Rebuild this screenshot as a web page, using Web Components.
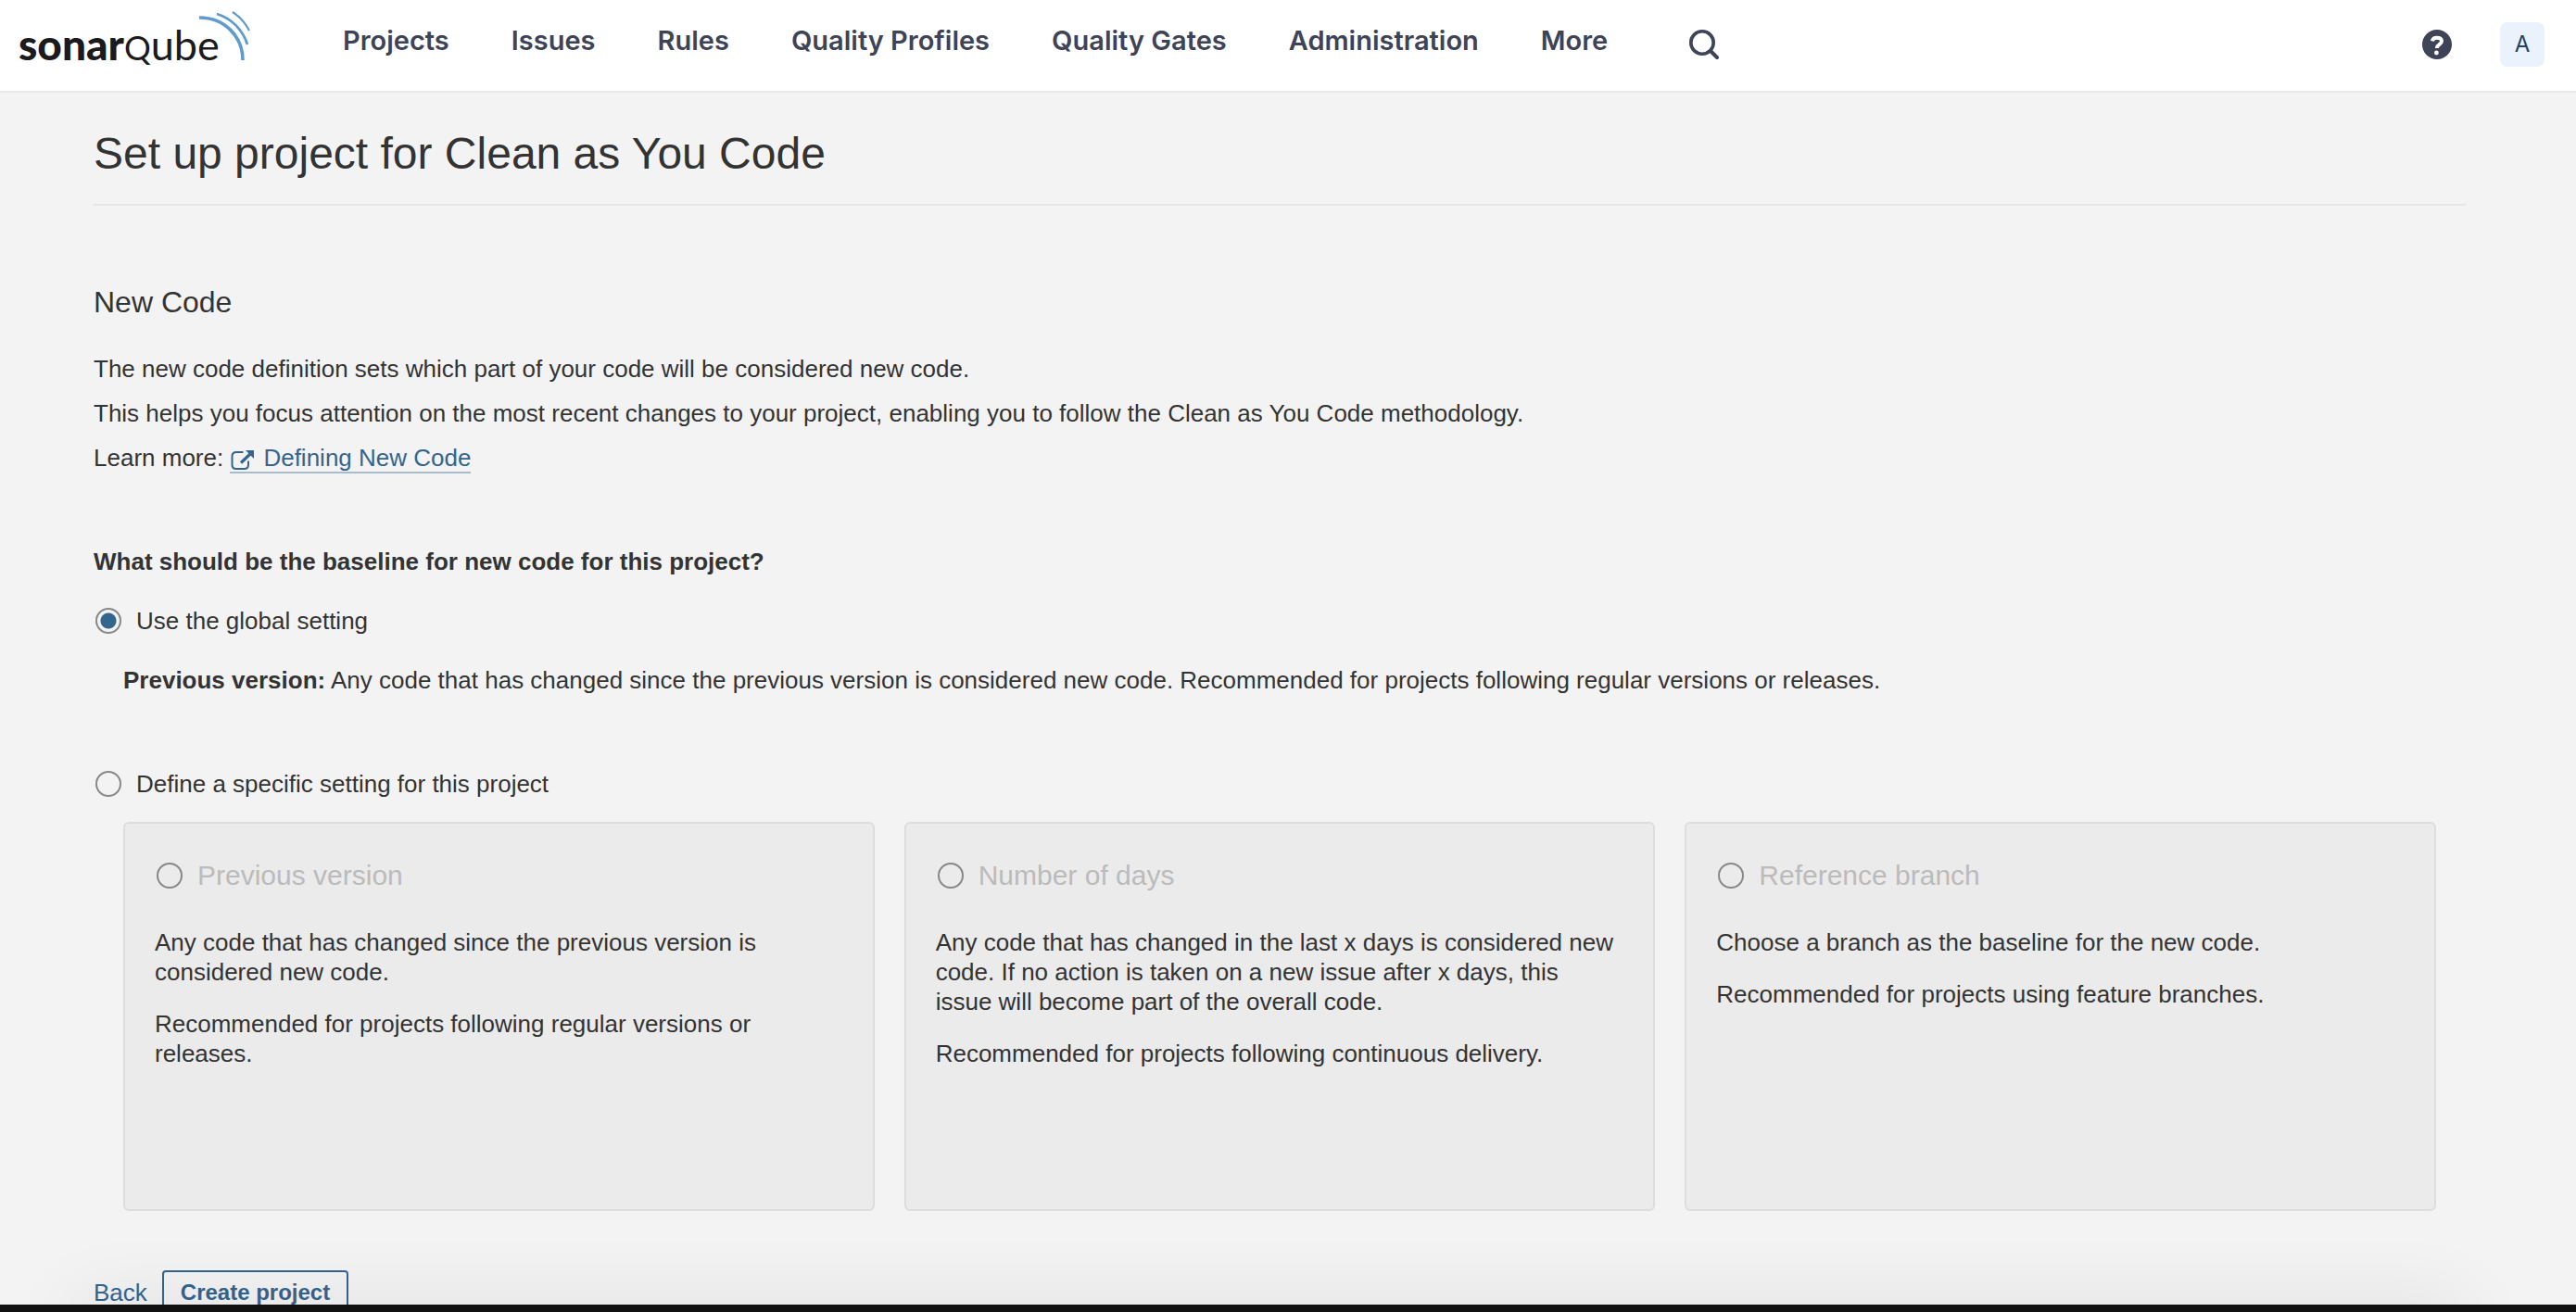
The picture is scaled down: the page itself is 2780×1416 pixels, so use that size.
<!DOCTYPE html>
<html lang="en">
<head>
<meta charset="utf-8">
<title>SonarQube - Set up project</title>
<style>
  html, body { margin: 0; height: 100%; }
  body {
    background: #f3f3f3;
    color: #333;
    font: 26px/48px "Liberation Sans", Arial, sans-serif;
  }
</style>
</head>
<body>
<sq-app>
  <sq-header slot="header"></sq-header>
  <sq-setup-page></sq-setup-page>
</sq-app>

<script>
const define = (name, html) => {
  const template = document.createElement('template');
  template.innerHTML = html;
  customElements.define(name, class extends HTMLElement {
    constructor() {
      super();
      this.attachShadow({ mode: 'open' }).append(template.content.cloneNode(true));
    }
  });
};

define('sq-app', `
  <style>
    :host { display: flex; flex-direction: column; height: 100vh; overflow: hidden; }
    main { flex: 1; min-height: 0; overflow: hidden; position: relative; }
    main::after {
      content: ""; position: absolute; left: 80px; right: 120px; bottom: -40px; height: 40px;
      box-shadow: 0 0 80px rgba(0, 0, 0, .1); pointer-events: none;
    }
    footer { height: 8px; background: #111; flex: none; position: relative; }
  </style>
  <slot name="header"></slot>
  <main><slot></slot></main>
  <footer></footer>
`);

define('sq-logo', `
  <style>
    :host { display: block; }
    a { display: flex; align-items: flex-start; color: #1b1a1d; text-decoration: none; }
    .word { display: flex; align-items: baseline; width: 194px; font: 46px/56px Lato, sans-serif; padding-top: 20px; }
    .bold { font-weight: 900; }
    .lens { font-size: 36px; text-transform: uppercase; }
    .thin { font-size: 45px; }
    svg { display: block; margin-top: 10px; flex: none; }
  </style>
  <a href="#" aria-label="sonarqube">
    <span class="word"><span class="bold">sonar</span><span class="lens">q</span><span class="thin">ube</span></span>
    <svg width="56" height="58" viewBox="214 10 56 58" fill="none" stroke="#5f9bcd">
      <path d="M215 19C243 19 262 40 262 65" stroke-width="3.6"/>
      <path d="M234 15C250 20 262 32 267 48" stroke-width="2.8"/>
      <path d="M251 13C259 18 265 25 269 33" stroke-width="2.2"/>
    </svg>
  </a>
`);

define('sq-nav-link', `
  <style>
    :host { display: block; }
    a {
      display: block; color: #3e4357; text-decoration: none; white-space: nowrap;
      font: 600 29px/40px Inter, sans-serif;
    }
  </style>
  <a href="#"><slot></slot></a>
`);

define('sq-header', `
  <style>
    :host { display: flex; align-items: flex-start; height: 98px; flex: none; background: #fff; border-bottom: 2px solid #e9e9e9; }
    sq-logo { width: 350px; padding-left: 20px; box-sizing: border-box; flex: none; }
    nav { display: flex; gap: 67px; padding: 24px 0 0 20px; }
    button { border: 0; padding: 0; background: none; font: inherit; display: block; }
    svg { display: block; }
    .search { margin: 32px 0 0 88px; }
    .tools { margin-left: auto; display: flex; align-items: center; gap: 52px; padding: 24px 34px 0 0; }
    .avatar { width: 48px; height: 48px; border-radius: 8px; background: #eaf3fb; color: #1f4463; font: 24px/48px Inter, sans-serif; }
  </style>
  <sq-logo></sq-logo>
  <nav>
    <sq-nav-link>Projects</sq-nav-link>
    <sq-nav-link>Issues</sq-nav-link>
    <sq-nav-link>Rules</sq-nav-link>
    <sq-nav-link>Quality Profiles</sq-nav-link>
    <sq-nav-link>Quality Gates</sq-nav-link>
    <sq-nav-link>Administration</sq-nav-link>
    <sq-nav-link>More</sq-nav-link>
  </nav>
  <button class="search" aria-label="Search">
    <svg width="32" height="32" fill="none" stroke="#3e4357"><circle cx="14" cy="14" r="12.2" stroke-width="3.6"/><path d="M23 23l7 7" stroke-width="4" stroke-linecap="round"/></svg>
  </button>
  <div class="tools">
    <button aria-label="Help">
      <svg width="32" height="32"><circle cx="16" cy="16" r="16" fill="#3e4357"/><path d="M11 12.4C11.4 9.8 13.2 8.8 15.8 8.8C18.9 8.8 21 10.2 21 12.6C21 16 16 15.8 15.8 20" fill="none" stroke="#fff" stroke-width="4"/><circle cx="15.4" cy="25" r="2.4" fill="#fff"/></svg>
    </button>
    <button class="avatar" aria-label="Account">A</button>
  </div>
`);

define('sq-link', `
  <style>
    :host { display: inline; }
    a { color: #34658f; text-decoration: none; border-bottom: 2px solid #a6bdd0; }
    svg { vertical-align: -6px; margin-right: 10px; }
  </style>
  <a href="#"><svg width="26" height="24" fill="none" stroke="#34658f" stroke-width="2">
      <path d="M14.5 3H7Q2.5 3 2.5 7.5V16.5Q2.5 21 7 21H15.5Q20 21 20 16.5V12.5"/>
      <path d="M12 14.5L22.5 4.5" stroke-width="3.2"/>
      <path d="M17 1H26V10Z" fill="#34658f" stroke="none"/>
    </svg><slot></slot></a>
`);

/* Radio button with its label; attributes: name, checked, disabled. */
customElements.define('sq-radio', class extends HTMLElement {
  constructor() {
    super();
    this.attachShadow({ mode: 'open' }).innerHTML = `
      <style>
        :host { display: block; }
        label { display: flex; align-items: center; gap: 16px; padding-left: 2px; }
        input {
          appearance: none; margin: 0; width: 28px; height: 28px; flex: none; box-sizing: border-box;
          border: 2px solid #888; border-radius: 50%; background: transparent;
        }
        input:checked { background: radial-gradient(circle, #34658f 8px, transparent 9px); }
        :host([disabled]) label { color: #bbb; }
      </style>
      <label><input type="radio"><span><slot></slot></span></label>`;
  }
  connectedCallback() {
    const input = this.shadowRoot.querySelector('input');
    input.name = this.getAttribute('name') || '';
    input.checked = this.hasAttribute('checked');
    input.disabled = this.hasAttribute('disabled');
  }
});

define('sq-option-card', `
  <style>
    :host {
      display: flex; flex-direction: column; gap: 24px; box-sizing: border-box; min-height: 420px; padding: 32px 38px 32px 32px;
      background: #ebebeb; border: 2px solid #ddd; border-radius: 6px; line-height: 32px;
    }
    sq-radio { font-size: 30px; line-height: 48px; margin-bottom: 8px; }
    ::slotted(p) { margin: 0; }
  </style>
  <sq-radio name="definition" disabled><slot name="title"></slot></sq-radio>
  <slot></slot>
`);

define('sq-button', `
  <style>
    :host { display: block; }
    button {
      display: block; height: 48px; box-sizing: border-box; padding: 0 18px; border: 2px solid #34658f; border-radius: 4px;
      background: transparent; color: #34658f; font: bold 24px/44px "Liberation Sans", Arial, sans-serif;
    }
  </style>
  <button type="button"><slot></slot></button>
`);

define('sq-setup-page', `
  <style>
    :host { display: block; padding: 40px 119px 0 101px; }
    h1, h2, h3, p { margin: 0; }
    h1 { font-weight: 400; font-size: 48px; line-height: 52px; padding-bottom: 28px; border-bottom: 2px solid #e6e6e6; }
    h2 { font-weight: 400; font-size: 32px; line-height: 40px; margin: 84px 0 28px; }
    h3 { font-size: 26px; line-height: 48px; margin: 64px 0 16px; }
    .detail { margin: 16px 0 64px 32px; }
    .cards { display: grid; grid-template-columns: repeat(3, 1fr); gap: 32px; margin: 17px 32px 64px; }
    .actions { display: flex; align-items: center; gap: 16px; }
    .actions a { color: #34658f; text-decoration: none; }
  </style>
  <h1>Set up project for Clean as You Code</h1>
  <h2>New Code</h2>
  <p>The new code definition sets which part of your code will be considered new code.</p>
  <p>This helps you focus attention on the most recent changes to your project, enabling you to follow the Clean as You Code methodology.</p>
  <p>Learn more: <sq-link>Defining New Code</sq-link></p>
  <h3>What should be the baseline for new code for this project?</h3>
  <sq-radio name="baseline" checked>Use the global setting</sq-radio>
  <p class="detail"><strong>Previous version:</strong> Any code that has changed since the previous version is considered new code. Recommended for projects following regular versions or releases.</p>
  <sq-radio name="baseline">Define a specific setting for this project</sq-radio>
  <div class="cards">
    <sq-option-card>
      <span slot="title">Previous version</span>
      <p>Any code that has changed since the previous version is considered new code.</p>
      <p>Recommended for projects following regular versions or releases.</p>
    </sq-option-card>
    <sq-option-card>
      <span slot="title">Number of days</span>
      <p>Any code that has changed in the last x days is considered new code. If no action is taken on a new issue after x days, this issue will become part of the overall code.</p>
      <p>Recommended for projects following continuous delivery.</p>
    </sq-option-card>
    <sq-option-card>
      <span slot="title">Reference branch</span>
      <p>Choose a branch as the baseline for the new code.</p>
      <p>Recommended for projects using feature branches.</p>
    </sq-option-card>
  </div>
  <div class="actions">
    <a href="#">Back</a>
    <sq-button>Create project</sq-button>
  </div>
`);
</script>
</body>
</html>
